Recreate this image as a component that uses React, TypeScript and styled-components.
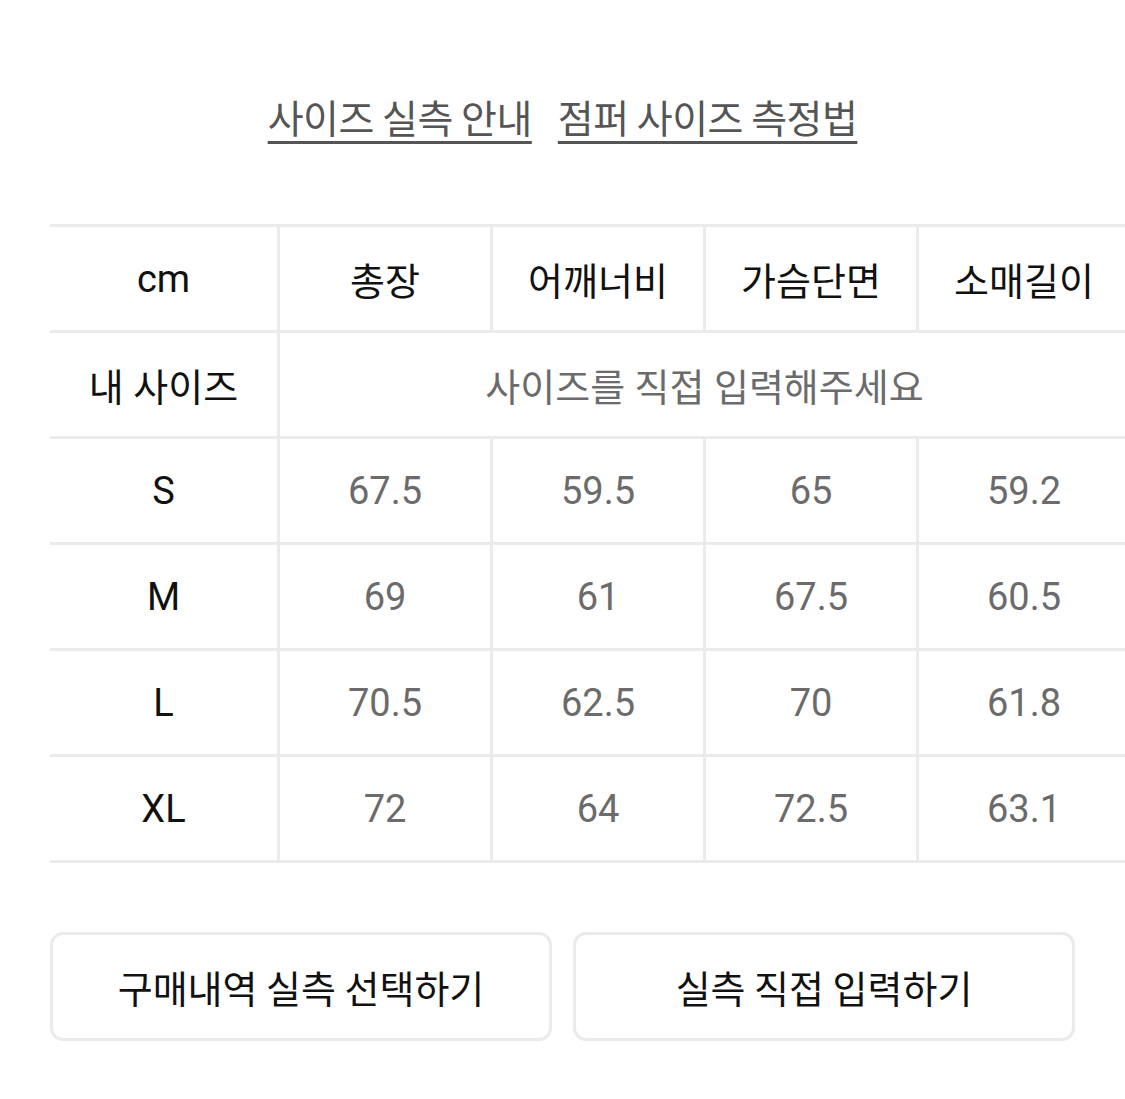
import React from "react";
import styled, { createGlobalStyle } from "styled-components";

const Global = createGlobalStyle`
  html, body { margin: 0; padding: 0; background: #ffffff; }
  body { font-family: Roboto, "Noto Sans CJK KR", sans-serif; }
`;

const Page = styled.div`
  width: 1125px;
  height: 1099px;
  overflow: hidden;
  box-sizing: border-box;
  padding: 91px 0 0 50px;
`;

const LinkBar = styled.div`
  display: flex;
  justify-content: center;
  gap: 26px;
  width: 1125px;
  margin-left: -50px;
  font-family: "Noto Sans CJK KR", sans-serif;
`;

const GuideLink = styled.a`
  font-size: 39px;
  line-height: 50px;
  color: #555555;
  text-decoration: underline;
  text-decoration-thickness: 3px;
  text-underline-offset: 8px;
  letter-spacing: -0.5px;
`;

const Table = styled.div`
  margin-top: 83px;
  display: grid;
  grid-template-columns: 227px 213px 213px 213px 213px;
  border-top: 3px solid #ebebeb;
  width: 1079px;
`;

const Cell = styled.div<{ $head?: boolean; $first?: boolean; $span?: number }>`
  box-sizing: border-box;
  height: 106px;
  display: flex;
  align-items: center;
  justify-content: center;
  border-bottom: 3px solid #ebebeb;
  border-left: ${(p) => (p.$first ? "none" : "3px solid #ebebeb")};
  grid-column: ${(p) => (p.$span ? `span ${p.$span}` : "auto")};
  font-size: 38px;
  color: ${(p) => (p.$head ? "#111111" : "#6b6b6b")};
  font-family: Roboto, "Noto Sans CJK KR", sans-serif;
`;

const Buttons = styled.div`
  margin-top: 69px;
  display: flex;
  gap: 21px;
`;

const Button = styled.button`
  width: 502px;
  height: 109px;
  box-sizing: border-box;
  border: 3px solid #ebebeb;
  border-radius: 13px;
  background: #ffffff;
  font-family: "Noto Sans CJK KR", sans-serif;
  font-size: 38px;
  color: #111111;
  padding: 0;
`;

const headers = ["cm", "총장", "어깨너비", "가슴단면", "소매길이"];
const rows: [string, string, string, string, string][] = [
  ["S", "67.5", "59.5", "65", "59.2"],
  ["M", "69", "61", "67.5", "60.5"],
  ["L", "70.5", "62.5", "70", "61.8"],
  ["XL", "72", "64", "72.5", "63.1"],
];

export default function App() {
  return (
    <>
      <Global />
      <Page>
        <LinkBar>
          <GuideLink>사이즈 실측 안내</GuideLink>
          <GuideLink>점퍼 사이즈 측정법</GuideLink>
        </LinkBar>
        <Table>
          {headers.map((h, i) => (
            <Cell key={h} $head $first={i === 0}>
              {h}
            </Cell>
          ))}
          <Cell $head $first>
            내 사이즈
          </Cell>
          <Cell $span={4}>사이즈를 직접 입력해주세요</Cell>
          {rows.map((r) =>
            r.map((v, i) => (
              <Cell key={r[0] + i} $head={i === 0} $first={i === 0}>
                {v}
              </Cell>
            ))
          )}
        </Table>
        <Buttons>
          <Button>구매내역 실측 선택하기</Button>
          <Button>실측 직접 입력하기</Button>
        </Buttons>
      </Page>
    </>
  );
}
